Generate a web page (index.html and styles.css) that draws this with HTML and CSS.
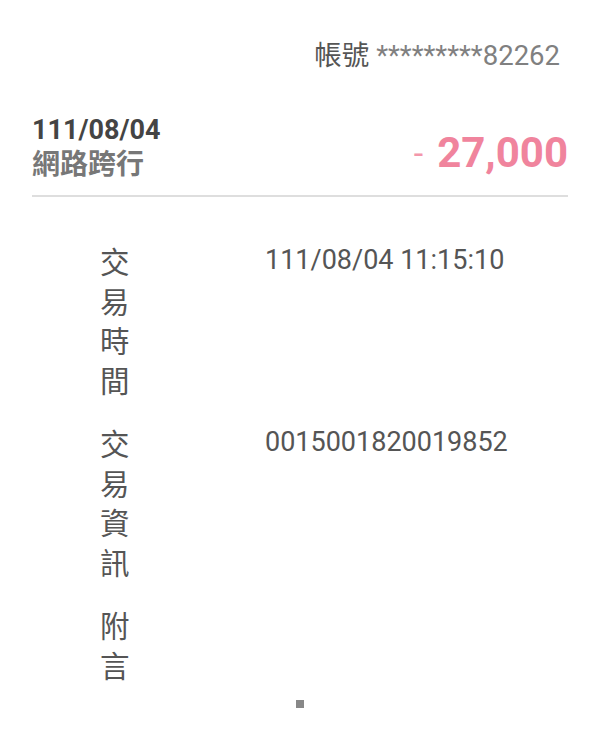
FILE: index.html
```html
<!DOCTYPE html>
<html lang="zh-Hant">
<head>
    <meta charset="UTF-8">
    <meta name="viewport" content="width=device-width, initial-scale=1.0">
    <title>交易明細</title>
    <link rel="stylesheet" href="styles.css">
</head>
<body>
    <div class="detail-page">
        <div class="account">帳號 <span class="account-no">*********82262</span></div>

        <div class="summary">
            <div class="summary-left">
                <div class="tx-date">111/08/04</div>
                <div class="tx-type">網路跨行</div>
            </div>
            <div class="amount"><span class="sign">-</span>27,000</div>
        </div>

        <div class="fields">
            <div class="field-label">交易時間</div>
            <div class="field-value">111/08/04 11:15:10</div>

            <div class="field-label">交易資訊</div>
            <div class="field-value">0015001820019852</div>

            <div class="field-label">附言</div>
            <div class="field-value"></div>
        </div>

        <div class="end-mark"></div>
    </div>
</body>
</html>
```

FILE: styles.css
```css
body {
    margin: 0;
    background: #ffffff;
    font-family: Roboto, "Noto Sans CJK TC", sans-serif;
    color: #555;
}
.detail-page {
    padding: 0 32px;
}
.account {
    text-align: right;
    font-size: 27.5px;
    line-height: 40px;
    padding-top: 36px;
    padding-right: 8px;
    color: #555;
}
.account-no {
    color: #808080;
}
.summary {
    display: flex;
    justify-content: space-between;
    align-items: center;
    margin-top: 36px;
    padding-bottom: 13px;
    border-bottom: 2px solid #dedede;
}
.tx-date {
    font-size: 27px;
    font-weight: bold;
    line-height: 36px;
    color: #444;
}
.tx-type {
    font-size: 28px;
    font-weight: bold;
    line-height: 34px;
    color: #777;
}
.amount {
    font-size: 42px;
    font-weight: bold;
    color: #f0849d;
    padding-top: 10px;
}
.amount .sign {
    font-size: 34px;
    font-weight: normal;
    vertical-align: 2px;
    margin-right: 14px;
    color: #f397ab;
}
.fields {
    display: grid;
    grid-template-columns: 30px 1fr;
    column-gap: 135px;
    row-gap: 24px;
    margin-top: 44px;
    margin-left: 68px;
}
.field-label {
    font-family: "Noto Sans CJK TC", sans-serif;
    font-size: 29.5px;
    line-height: 39.5px;
    color: #555;
}
.field-value {
    font-size: 27px;
    line-height: 39.5px;
    color: #555;
}
.end-mark {
    width: 8px;
    height: 8px;
    background: #888;
    margin: 16px auto 0;
}
```
